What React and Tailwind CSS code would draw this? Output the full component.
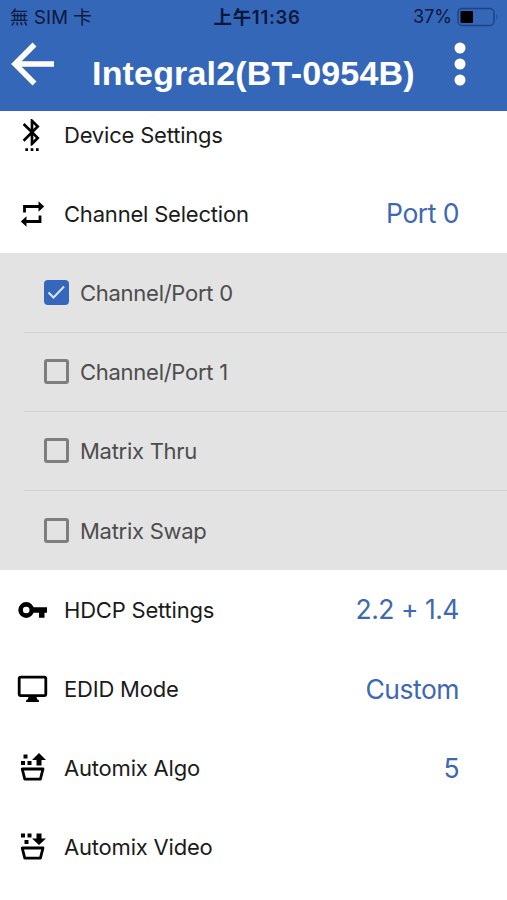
import React, { useState } from 'react';
import { MdSettingsBluetooth } from 'react-icons/md';

const PORTS = [
  { label: 'Channel/Port 0', value: 'Port 0' },
  { label: 'Channel/Port 1', value: 'Port 1' },
  { label: 'Matrix Thru', value: 'Thru' },
  { label: 'Matrix Swap', value: 'Swap' },
];

const RepeatIcon = () => (
  <svg width="32" height="32" viewBox="0 0 32 32">
    <path d="M8.500 14.500V8.500H23M24 17.500v6H10" fill="none" stroke="black" strokeWidth="2.800" />
    <path d="M22.500 3.200L28.200 8.500l-5.700 5.300zM10.500 18.200L4.800 23.500l5.700 5.300z" />
  </svg>
);

const KeyIcon = () => (
  <svg width="32" height="32" viewBox="0 0 32 32">
    <circle cx="10.200" cy="16" r="5.600" fill="none" stroke="black" strokeWidth="4.600" />
    <path d="M16.500 13.300H31v5.400h-2.500v5h-5.500v-5h-6.500z" />
  </svg>
);

const MonitorIcon = () => (
  <svg width="32" height="30" viewBox="0 0 32 30">
    <rect x="3.2" y="3.2" width="26.6" height="18.5" rx="1.6" fill="none" stroke="black" strokeWidth="2.8" />
    <path d="M13 21h7l1.2 4.5H22q1 .3 1 2.500H10q0-2.200 1-2.500h.8z" />
  </svg>
);

// Basket with loose blocks above it, shared by both Automix rows
const BasketIcon = ({ down }) => (
  <svg width="32" height="32" viewBox="0 0 32 32">
    <path d="M6.200 17h20.800l-2.600 10.200H8.800z" fill="none" stroke="black" strokeWidth="2.800" strokeLinejoin="round" />
    {down ? (
      <>
        <path d="M5 2.500h4v4H5zM11.500 2.500h4v4h-4zM8.500 9h4v4h-4z" />
        <path d="M20.500 2.500h5v5h4.500l-7 6.500-7-6.500h4.500z" />
      </>
    ) : (
      <>
        <path d="M7.500 2.500h4v4h-4zM5 9h4v4H5zM11.500 9h4v4h-4z" />
        <path d="M20.500 13.500h5v-5.500h4.500l-7-7-7 7h4.500z" />
      </>
    )}
  </svg>
);

const Row = ({ icon, label, value }) => (
  <div className="flex h-[79.2px] items-center pl-4 pr-12">
    <div className="flex w-8 justify-center text-black">{icon}</div>
    <span className="ml-4 pt-px text-[22px] tracking-[-0.2px] text-[#1b1b1b]">{label}</span>
    {value && <span className="ml-auto pt-px text-[26.5px] tracking-[-0.5px] text-[#3d68b2]">{value}</span>}
  </div>
);

const PortOption = ({ label, checked, last, onClick }) => (
  <button onClick={onClick} className="flex h-[79.2px] w-full pl-6 text-left">
    <span className={`flex flex-1 items-center pl-5 ${last ? '' : 'border-b-[1.5px] border-[#d2d2d2]'}`}>
      {checked ? (
        <span className="flex size-[25px] items-center justify-center rounded-[4px] bg-[#3567bc]">
          <svg width="19" height="16" viewBox="0 0 19 16">
            <path d="M1.500 8.500l5 5L17 2.500" fill="none" stroke="#d9e6fa" strokeWidth="2" />
          </svg>
        </span>
      ) : (
        <span className="size-[25px] rounded-[3px] border-3 border-[#7e7e7e]" />
      )}
      <span className="ml-[11px] pt-[2px] text-[22px] tracking-[-0.27px] text-[#4d4d4d]">{label}</span>
    </span>
  </button>
);

const StatusBar = () => (
  <div className="grid h-[34px] grid-cols-3 items-center pl-[10px] pr-[8px] text-[18px] leading-[34px] text-[#07183b]">
    <span className="whitespace-nowrap text-[18.5px] tracking-[0.15px]">無 SIM 卡</span>
    <span className="whitespace-nowrap pl-[5px] text-center text-[18.5px] font-semibold tracking-[0.7px]">上午11:36</span>
    <span className="flex items-center justify-end">
      37%
      <svg className="ml-[5px]" width="42" height="20" viewBox="0 0 42 20">
        <rect x="1" y="1.500" width="36" height="17" rx="4" fill="none" stroke="#1d4384" strokeWidth="1.500" />
        <rect x="3.500" y="4" width="12.500" height="12" rx="1" fill="black" />
        <path d="M39.500 7q2 3 0 6z" fill="#1d4384" />
      </svg>
    </span>
  </div>
);

const App = () => {
  const [selected, setSelected] = useState(0);

  return (
    <div className="h-[900px] w-[507px] overflow-hidden bg-white font-['Inter','Noto_Sans_CJK_TC',sans-serif]">
      {/* Header sits over the scrolled list */}
      <header className="relative z-10 h-[111px] bg-[#3567b9]">
        <StatusBar />
        <div className="flex h-[77px] items-start pl-[11px] pr-[41px] text-white">
          <svg className="mt-[8px]" width="44" height="44" viewBox="0 0 44 44" fill="none" stroke="white" strokeWidth="5.5">
            <path d="M43 22H4M23.500 2.500L4 22l19.500 19.500" />
          </svg>
          <h1 className="ml-[37px] mt-[19px] whitespace-nowrap font-['Liberation_Sans',sans-serif] text-[34px] font-bold leading-[40px] tracking-[0.18px]">
            Integral2(BT-0954B)
          </h1>
          <svg className="ml-auto mt-[8px]" width="12" height="44" viewBox="0 0 12 44" fill="white">
            <circle cx="6" cy="6" r="5.500" />
            <circle cx="6" cy="22" r="5.500" />
            <circle cx="6" cy="38" r="5.500" />
          </svg>
        </div>
      </header>

      <main className="-mt-[16px]">
        <Row icon={<MdSettingsBluetooth size={32} />} label="Device Settings" />
        <Row icon={<RepeatIcon />} label="Channel Selection" value={PORTS[selected].value} />
        <div className="bg-[#e3e3e3]">
          {PORTS.map((port, i) => (
            <PortOption
              key={port.label}
              label={port.label}
              checked={i === selected}
              last={i === PORTS.length - 1}
              onClick={() => setSelected(i)}
            />
          ))}
        </div>
        <Row icon={<KeyIcon />} label="HDCP Settings" value="2.2 + 1.4" />
        <Row icon={<MonitorIcon />} label="EDID Mode" value="Custom" />
        <Row icon={<BasketIcon />} label="Automix Algo" value="5" />
        <Row icon={<BasketIcon down />} label="Automix Video" />
      </main>
    </div>
  );
};

export default App;
